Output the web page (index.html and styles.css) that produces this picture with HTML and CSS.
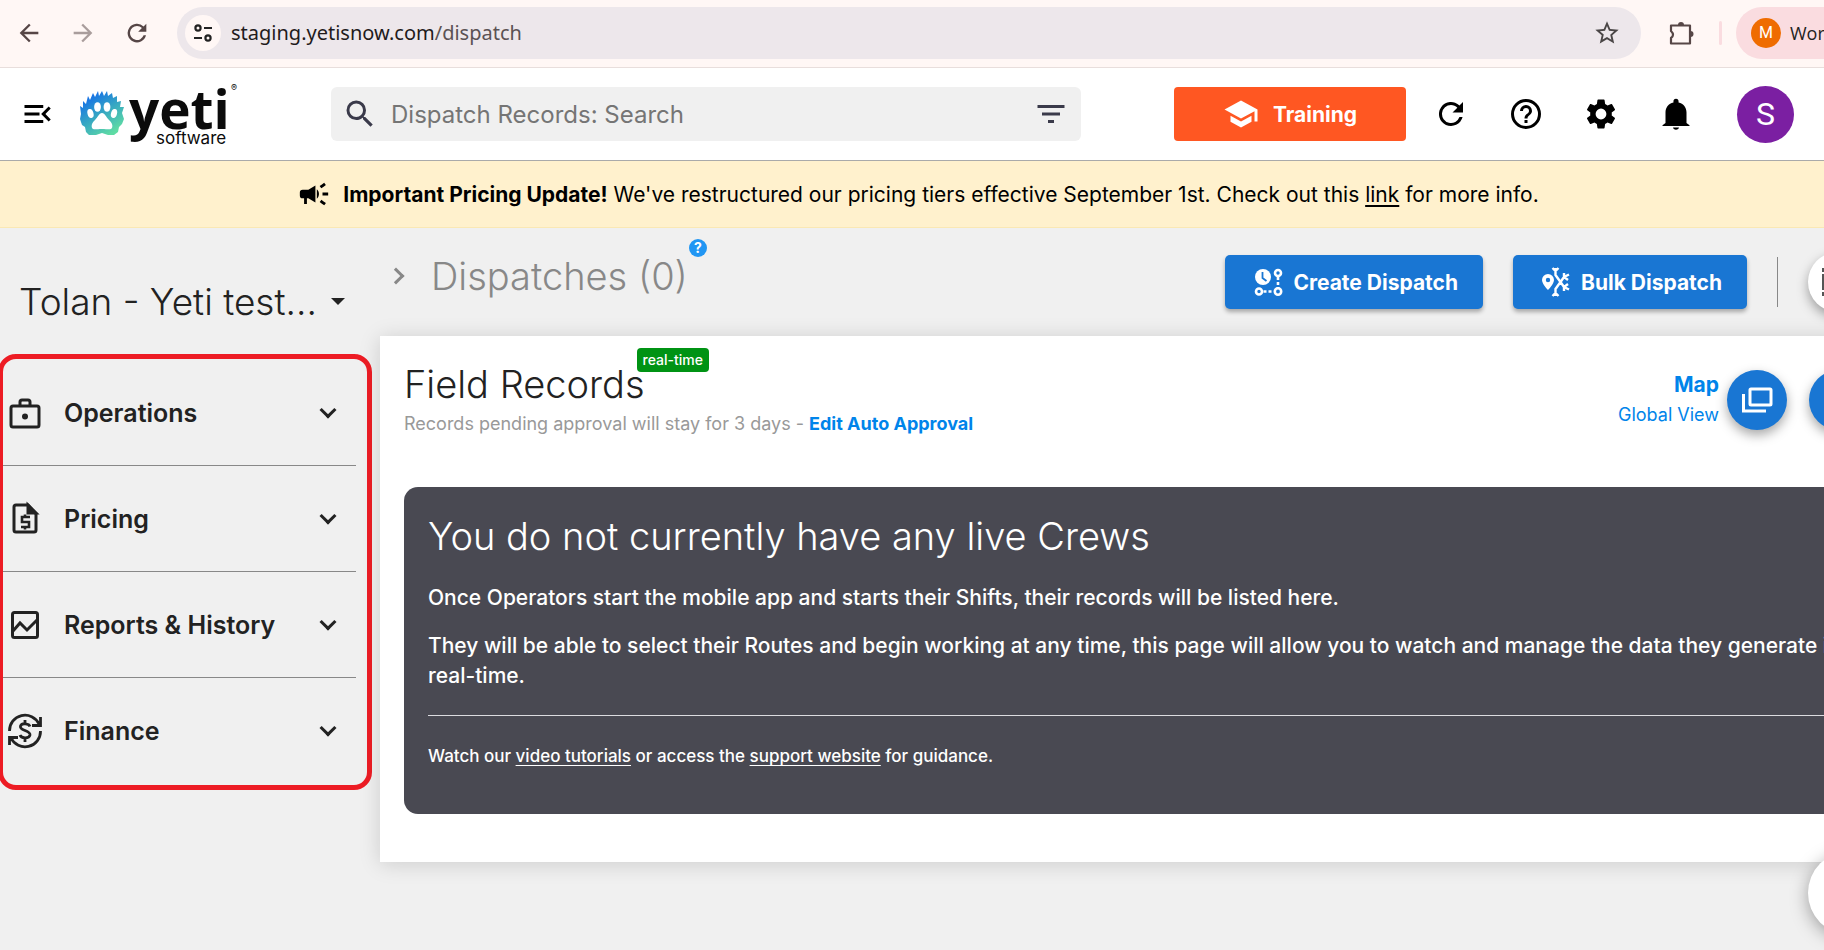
FILE: index.html
```html
<!DOCTYPE html>
<html lang="en">
<head>
<meta charset="utf-8">
<title>Yeti Software - Dispatch</title>
<link rel="stylesheet" href="styles.css">
</head>
<body>
<div class="browser-bar">
  <button class="nav-btn" aria-label="Back"><svg width="28" height="28" viewBox="0 0 24 24"><path d="M20 11H7.8l5.6-5.6L12 4l-8 8 8 8 1.4-1.4L7.8 13H20z"/></svg></button>
  <button class="nav-btn nav-off" aria-label="Forward"><svg width="28" height="28" viewBox="0 0 24 24"><path d="M4 13h12.2l-5.6 5.6L12 20l8-8-8-8-1.4 1.4 5.6 5.6H4z"/></svg></button>
  <button class="nav-btn" aria-label="Reload"><svg width="28" height="28" viewBox="0 0 24 24"><path d="M17.65 6.35A8 8 0 1 0 19.73 14h-2.08A6 6 0 1 1 12 6c1.66 0 3.14.69 4.22 1.78L13 11h7V4z"/></svg></button>
  <div class="address">
    <span class="site-info"><svg width="24" height="24" viewBox="0 0 24 24" fill="none" stroke="#222" stroke-width="2.2"><circle cx="7" cy="7" r="2.6"/><path d="M13 7h8M3 17h8"/><circle cx="17" cy="17" r="2.6"/></svg></span>
    <span class="url">staging.yetisnow.com<span class="url-path">/dispatch</span></span>
    <button class="star" aria-label="Bookmark"><svg width="28" height="28" viewBox="0 0 24 24"><path d="M22 9.24l-7.19-.62L12 2 9.19 8.63 2 9.24l5.46 4.73L5.82 21 12 17.27 18.18 21l-1.63-7.03zM12 15.4l-3.76 2.27 1-4.28-3.32-2.88 4.38-.38L12 6.1l1.71 4.04 4.38.38-3.32 2.88 1 4.28z"/></svg></button>
  </div>
  <button class="nav-btn ext" aria-label="Extensions"><svg width="28" height="28" viewBox="0 0 28 28"><path d="M4 6.500h19v18h-19v-5.500q4-3 0-7z" fill="none" stroke="#564646" stroke-width="2.200" stroke-linejoin="round"/><path d="M11 6a3 3 0 0 1 6 0zM23.500 12a3 3 0 0 1 0 6z"/></svg></button>
  <span class="bar-sep"></span>
  <div class="profile"><span class="profile-dot">M</span><span>Work</span></div>
</div>

<header class="app-bar">
  <button class="plain" aria-label="Collapse menu"><svg width="36" height="36" viewBox="0 0 24 24"><path d="M3 18h12.500v-2H3zM3 13h10v-2H3zM3 6v2h12.500V6zM20.500 15.590L16.920 12l3.580-3.590L19.090 7l-5 5 5 5z"/></svg></button>
  <a class="logo" href="#" aria-label="Yeti software">
    <svg width="164" height="76" viewBox="0 0 164 76">
      <defs><linearGradient id="fur" x1="0.200" y1="0.100" x2="0.750" y2="0.950"><stop offset="0" stop-color="#146fe8"/><stop offset="0.500" stop-color="#37a8c2"/><stop offset="1" stop-color="#5fdca4"/></linearGradient></defs>
      <g transform="translate(0 15)">
        <path fill="url(#fur)" d="M1 23L0 15L3 17L3 10L6 13L8 5L10 9L13 2L15 6L18 0L19 5L22 0L24 5L27 0L28 5L32 2L33 7L37 5L37 11L41 10L40 16L44 16L42 22L44 28L42 33L39 36L38 41L34 44L28 44L22 42L16 44L9 44L6 41L5 36L2 34L0 28z"/>
        <g fill="#fff"><ellipse cx="17.500" cy="16" rx="3.400" ry="4.800"/><ellipse cx="27" cy="16" rx="3.400" ry="4.800"/><ellipse cx="10.500" cy="22.500" rx="3" ry="4.600" transform="rotate(-15 10.500 22.500)"/><ellipse cx="34" cy="22.500" rx="3" ry="4.600" transform="rotate(15 34 22.500)"/><path d="M22 22C25 22 26 26 29 29C32 32 33 34 32 37C31 39 28 38 22 38C16 38 13 39 12 37C11 34 12 32 15 29C18 26 19 22 22 22z"/></g>
      </g>
      <text class="logo-word" x="49" y="53">yeti</text>
      <text class="logo-sub" x="76" y="68">software</text>
      <text class="logo-reg" x="151" y="15">®</text>
    </svg>
  </a>
  <div class="search">
    <svg width="36" height="36" viewBox="0 0 24 24" fill="#3a3a4a"><path d="M15.500 14h-.790l-.280-.270A6.470 6.470 0 0 0 16 9.500 6.500 6.500 0 1 0 9.500 16c1.610 0 3.090-.590 4.230-1.570l.270.280v.790l5 4.990L20.490 19zm-6 0C7.010 14 5 11.990 5 9.500S7.010 5 9.500 5 14 7.010 14 9.500 11.990 14 9.500 14z"/></svg>
    <input type="text" aria-label="Search dispatch records" placeholder="Dispatch Records: Search">
    <button class="plain" aria-label="Filter"><svg width="36" height="36" viewBox="0 0 24 24" fill="#3a3a4a"><path d="M10 18h4v-2h-4zM3 6v2h18V6zm3 7h12v-2H6z"/></svg></button>
  </div>
  <div class="app-actions">
    <button class="training"><svg width="36" height="36" viewBox="0 0 24 24" fill="#fff"><path d="M5 13.180v4L12 21l7-3.820v-4L12 17zM12 3L1 9l11 6 9-4.910V17h2V9z"/></svg>Training</button>
    <button class="plain" aria-label="Refresh"><svg width="36" height="36" viewBox="0 0 24 24"><path d="M17.650 6.350A8 8 0 1 0 19.730 14h-2.080A6 6 0 1 1 12 6c1.660 0 3.140.690 4.220 1.780L13 11h7V4z"/></svg></button>
    <button class="plain" aria-label="Help"><svg width="36" height="36" viewBox="0 0 24 24"><path d="M11 18h2v-2h-2zm1-16a10 10 0 1 0 0 20 10 10 0 0 0 0-20zm0 18a8 8 0 1 1 0-16 8 8 0 0 1 0 16zm0-14a4 4 0 0 0-4 4h2a2 2 0 1 1 4 0c0 2-3 1.750-3 5h2c0-2.250 3-2.500 3-5a4 4 0 0 0-4-4z"/></svg></button>
    <button class="plain" aria-label="Settings"><svg width="36" height="36" viewBox="0 0 24 24"><path d="M19.140 12.940c.040-.300.060-.610.060-.940 0-.320-.020-.640-.070-.940l2.030-1.580a.490.490 0 0 0 .120-.610l-1.920-3.320a.488.488 0 0 0-.590-.220l-2.390.960c-.500-.380-1.030-.700-1.620-.940l-.360-2.540a.484.484 0 0 0-.480-.410h-3.840c-.240 0-.430.170-.470.410l-.360 2.540c-.590.240-1.130.570-1.620.940l-2.390-.960c-.220-.080-.470 0-.590.220L2.740 8.870c-.120.210-.080.470.120.610l2.030 1.580c-.050.300-.090.630-.090.940s.020.640.070.940l-2.030 1.580a.490.490 0 0 0-.120.610l1.920 3.320c.120.220.370.290.590.220l2.390-.960c.500.380 1.030.700 1.620.940l.360 2.540c.050.240.240.410.480.410h3.840c.240 0 .440-.170.470-.410l.360-2.540c.590-.240 1.130-.560 1.620-.940l2.390.960c.220.080.470 0 .590-.220l1.920-3.320c.120-.220.070-.470-.120-.610zM12 15.600a3.600 3.600 0 1 1 0-7.200 3.600 3.600 0 0 1 0 7.200z"/></svg></button>
    <button class="plain" aria-label="Notifications"><svg width="36" height="36" viewBox="0 0 24 24"><path d="M12 22.500c1.100 0 2-.700 2-1.500h-4c0 .800.900 1.500 2 1.500zM19 18v-7c0-3.300-2-6-5.300-6.700V3.500a1.700 1.700 0 0 0-3.400 0v.800C7 5 5 7.700 5 11v7l-2 1.500V20h18v-.500z"/></svg></button>
    <button class="avatar" aria-label="Account">S</button>
  </div>
</header>

<div class="notice">
  <svg width="34" height="34" viewBox="0 0 24 24"><path d="M18 11v2h4v-2zM16 17.610c.960.710 2.210 1.650 3.200 2.390.400-.530.800-1.070 1.200-1.600-.990-.740-2.240-1.680-3.200-2.400-.400.540-.800 1.080-1.200 1.610zM20.400 5.600c-.400-.530-.800-1.070-1.200-1.600-.990.740-2.240 1.680-3.200 2.400.400.530.800 1.070 1.200 1.600.960-.720 2.210-1.650 3.200-2.400zM4 9a2 2 0 0 0-2 2v2a2 2 0 0 0 2 2h1v4h2v-4h1l5 3V6L8 9zM15.500 12c0-1.330-.580-2.530-1.500-3.350v6.690c.920-.810 1.500-2.010 1.500-3.340z"/></svg>
  <p><strong>Important Pricing Update!</strong> We've restructured our pricing tiers effective September 1st. Check out this <a href="#">link</a> for more info.</p>
</div>

<div class="layout">
  <aside class="sidebar">
    <button class="company"><span>Tolan - Yeti test...</span><i class="caret"></i></button>
    <nav class="menu">
      <button class="menu-item"><svg width="38" height="38" viewBox="0 0 38 38" fill="none" stroke="#222" stroke-width="3"><rect x="5" y="12" width="28" height="21" rx="2"/><path d="M14 12V8q0-2 2-2h6q2 0 2 2v4"/><circle cx="19" cy="22.500" r="3" fill="#222" stroke="none"/></svg><span>Operations</span><i class="chev"></i></button>
      <button class="menu-item"><svg width="38" height="38" viewBox="0 0 38 38" fill="none" stroke="#222" stroke-width="3"><path d="M22 5H10q-2 0-2 2v23q0 2 2 2h18q2 0 2-2V14z"/><path d="M22 5v8h8z" fill="#222"/><path d="M24 17h-8v5h7v5h-8M19 14.500v3M19 26v3.500" stroke-width="2.600"/></svg><span>Pricing</span><i class="chev"></i></button>
      <button class="menu-item"><svg width="38" height="38" viewBox="0 0 38 38" fill="none" stroke="#222" stroke-width="3"><rect x="6.500" y="6.500" width="25" height="25" rx="2"/><path d="M7 25l7-8 7 7 10-10"/></svg><span>Reports &amp; History</span><i class="chev"></i></button>
      <button class="menu-item"><svg width="38" height="38" viewBox="0 0 38 38" fill="none" stroke="#222" stroke-width="2.800"><path d="M3.500 19A15.500 15.500 0 0 1 33 12M34.500 19A15.500 15.500 0 0 1 5 26M26 13.500h8.500V5M12 25.500H3.500V33"/><path d="M24 14.500c-1-3-8-4-9.500-.500-1.500 5 10 4 9.500 9-1 4-9 3.500-10 0M19 8v4M19 26v4"/></svg><span>Finance</span><i class="chev"></i></button>
    </nav>
  </aside>

  <main class="content">
    <div class="page-head">
      <i class="crumb"></i>
      <h1>Dispatches (0)<button class="tip" aria-label="Help">?</button></h1>
      <div class="head-actions">
        <button class="primary"><svg width="30" height="30" viewBox="0 0 30 30" fill="none" stroke="#fff" stroke-width="2.600"><circle cx="10" cy="10" r="8" fill="#fff" stroke="none"/><path d="M9.500 5v6l4 3" stroke="#1976d3" stroke-width="1.800"/><circle cx="25" cy="6" r="3"/><circle cx="6" cy="24.500" r="3"/><circle cx="25" cy="24.500" r="3.200"/><path d="M25 10v11M10.500 24.500h10" stroke-dasharray="3 2"/></svg>Create Dispatch</button>
        <button class="primary"><svg width="30" height="30" viewBox="0 0 30 30" fill="none" stroke="#fff" stroke-width="2.400"><path fill="#fff" stroke="none" fill-rule="evenodd" d="M7 7a6 6 0 0 0-6 6c0 4 6 10 6 10s6-6 6-10a6 6 0 0 0-6-6zm0 3.800a2.200 2.200 0 1 1 0 4.400 2.200 2.200 0 0 1 0-4.400z"/><path d="M14.500 1v7l5 7-5 7v7M11.500 1l3 3 3-3M11.500 29l3-3 3 3M19.500 15l3.500-5 5-2.500M19.500 15l3.500 5 5 2.500M23 6v4l4 3M23 24v-4l4-3"/></svg>Bulk Dispatch</button>
        <span class="head-sep"></span>
        <button class="fab fab-light" aria-label="Options"><svg width="32" height="32" viewBox="0 0 32 32" fill="none" stroke="#555" stroke-width="4"><path d="M0 4h28M2 8v16M0 28h28M10 12v8h8"/></svg></button>
      </div>
    </div>

    <section class="card">
      <div class="card-head">
        <div>
          <h2>Field Records<span class="badge">real-time</span></h2>
          <p class="sub">Records pending approval will stay for 3 days - <a href="#">Edit Auto Approval</a></p>
        </div>
        <div class="card-tools">
          <a class="map-link" href="#"><b>Map</b><span>Global View</span></a>
          <button class="fab" aria-label="Open map"><svg width="32" height="32" viewBox="0 0 32 32" fill="none" stroke="#fff" stroke-width="3"><rect x="9" y="5" width="21" height="16" rx="1"/><path d="M2.500 10v17H25"/></svg></button>
          <button class="fab fab-next" aria-label="More"></button>
        </div>
      </div>
      <div class="empty">
        <h3>You do not currently have any live Crews</h3>
        <p>Once Operators start the mobile app and starts their Shifts, their records will be listed here.</p>
        <p>They will be able to select their Routes and begin working at any time, this page will allow you to watch and manage the data they generate in real-time.</p>
        <hr>
        <p class="guide">Watch our <a href="#">video tutorials</a> or access the <a href="#">support website</a> for guidance.</p>
      </div>
    </section>
  </main>
</div>
<button class="chat" aria-label="Chat"></button>
</body>
</html>
```

FILE: styles.css
```css
* { box-sizing: border-box; }
html, body { height: 100%; }
body {
  margin: 0;
  overflow: hidden;
  display: flex;
  flex-direction: column;
  background: #f0f0f0;
  color: #222;
  font-family: Inter, "Liberation Sans", sans-serif;
}
button { border: 0; background: none; padding: 0; font: inherit; color: inherit; }
svg { flex: none; display: block; }
h1, h2, h3, p { margin: 0; }

/* Browser toolbar */
.browser-bar {
  flex: none;
  display: flex;
  align-items: center;
  height: 68px;
  padding-left: 15px;
  padding-bottom: 2px;
  background: #fff7f5;
  border-bottom: 1px solid #e8dedc;
  overflow: hidden;
}
.nav-btn { margin-right: 26px; fill: #564646; flex: none; }
.nav-off { opacity: 0.5; }
.address {
  flex: 1;
  display: flex;
  align-items: center;
  height: 52px;
  margin-right: 26px;
  padding: 0 20px 0 8px;
  border-radius: 26px;
  background: #ede7eb;
}
.site-info {
  width: 36px;
  height: 36px;
  border-radius: 50%;
  background: #fff7f5;
  display: grid;
  place-items: center;
}
.url { flex: 1; margin-left: 10px; font: 20px "Noto Sans", "Open Sans", sans-serif; color: #1f1b1c; }
.url-path { color: #5b5254; }
.star { fill: #4a4646; }
.ext { margin-right: 24px; }
.bar-sep { width: 3px; height: 24px; border-radius: 2px; background: #fadce0; margin-right: 14px; }
.profile {
  display: flex;
  align-items: center;
  gap: 9px;
  width: 88px;
  height: 52px;
  padding-left: 15px;
  border-radius: 26px 0 0 26px;
  background: #fadce0;
  font: 18px "Open Sans", sans-serif;
  overflow: hidden;
}
.profile-dot {
  flex: none;
  width: 30px;
  height: 30px;
  border-radius: 50%;
  background: #ef6c00;
  color: #fff;
  font: 16px/30px Roboto, sans-serif;
  text-align: center;
}

/* Application bar */
.app-bar {
  flex: none;
  display: flex;
  align-items: center;
  height: 93px;
  padding: 0 30px 0 20px;
  background: #fff;
  border-bottom: 1px solid #aaa;
}
.plain { flex: none; }
.logo { margin-left: 24px; flex: none; }
.logo-word { font: 700 53px "Open Sans", sans-serif; fill: #0b0b0b; }
.logo-sub { font: 17px Inter, sans-serif; fill: #0b0b0b; }
.logo-reg { font: 9px Inter, sans-serif; fill: #0b0b0b; }
.search {
  flex: 0 1 750px;
  display: flex;
  align-items: center;
  height: 54px;
  margin-left: 87px;
  padding: 0 12px 0 11px;
  border-radius: 6px;
  background: #f0f0f0;
}
.search input {
  flex: 1;
  min-width: 0;
  margin-left: 13px;
  padding: 0;
  border: 0;
  outline: 0;
  background: none;
  font: 24px Inter, sans-serif;
}
.search input::placeholder { color: #757575; opacity: 1; }
.app-actions { display: flex; align-items: center; gap: 39px; margin-left: auto; }
.training {
  display: flex;
  align-items: center;
  justify-content: center;
  gap: 14px;
  width: 232px;
  height: 54px;
  margin-right: -12px;
  border-radius: 4px;
  background: #ff5722;
  color: #fff;
  font-size: 21px;
  font-weight: 700;
}
.avatar {
  width: 57px;
  height: 57px;
  margin-left: 4px;
  border-radius: 50%;
  background: #7b1fa2;
  color: #fff;
  font: 32px Roboto, sans-serif;
}

/* Announcement */
.notice {
  flex: none;
  display: flex;
  align-items: center;
  justify-content: center;
  gap: 12px;
  height: 67px;
  padding-left: 12px;
  background: #fff1cd;
  border-bottom: 1px solid #fae8b4;
  color: #000;
  font-size: 21px;
}
.notice a { color: inherit; text-underline-offset: 3px; }

/* Page layout */
.layout { flex: 1; display: flex; min-height: 0; }
.sidebar { flex: none; width: 380px; padding-top: 40px; }
.company {
  display: flex;
  align-items: center;
  gap: 14px;
  height: 66px;
  padding-left: 19px;
  font-size: 37px;
  font-weight: 300;
}
.caret { border: 7px solid transparent; border-top-color: #222; border-bottom: 0; }
.menu {
  width: 374px;
  height: 436px;
  margin: 20px 0 0 -2px;
  border: 5px solid #ed1c24;
  border-radius: 18px;
  padding: 1px 11px 0 0;
}
.menu-item {
  display: flex;
  align-items: center;
  width: 100%;
  height: 106px;
  padding: 0 19px 0 3px;
  border-bottom: 1px solid #888;
  font-size: 25px;
  font-weight: 600;
}
.menu-item:last-child { border-bottom: 0; }
.menu-item span { flex: 1; margin-left: 20px; text-align: left; }
.chev, .crumb {
  flex: none;
  width: 12px;
  height: 12px;
  margin: 0 3px 6px 0;
  border: solid #222;
  border-width: 0 3px 3px 0;
  transform: rotate(45deg);
}
.content { flex: 1; min-width: 0; }
.page-head { display: flex; align-items: center; height: 108px; padding-left: 10px; }
.crumb { margin: 0 29px 12px 0; border-color: #888; transform: rotate(-45deg); }
.page-head h1 {
  display: flex;
  margin-bottom: 12px;
  color: #888;
  font-size: 38px;
  font-weight: 300;
  white-space: nowrap;
}
.tip {
  flex: none;
  width: 18px;
  height: 18px;
  margin-left: 1px;
  margin-top: -14px;
  border-radius: 50%;
  background: #2196f3;
  color: #fff;
  font: 700 14px/18px Inter, sans-serif;
}
.head-actions { display: flex; align-items: center; gap: 30px; margin-left: auto; margin-right: -44px; }
.primary {
  display: flex;
  align-items: center;
  gap: 10px;
  height: 54px;
  padding: 0 25px 0 28px;
  border-radius: 5px;
  background: #1976d3;
  color: #fff;
  font-size: 21px;
  font-weight: 700;
  white-space: nowrap;
  box-shadow: 0 3px 4px rgba(0, 0, 0, 0.3);
}
.head-sep { width: 1px; height: 50px; background: #888; }
.fab {
  flex: none;
  display: grid;
  place-items: center;
  width: 60px;
  height: 60px;
  border-radius: 50%;
  background: #1976d3;
  box-shadow: 0 5px 12px rgba(0, 0, 0, 0.35);
}
.fab-light { background: #fff; }

/* Records card */
.card {
  margin-right: -72px;
  padding: 24px 24px 48px;
  background: #fff;
  box-shadow: 0 2px 20px rgba(0, 0, 0, 0.15);
}
.card-head { display: flex; justify-content: space-between; height: 127px; }
.card-head h2 {
  display: flex;
  font-size: 38px;
  font-weight: 300;
  line-height: 48px;
}
.badge {
  align-self: flex-start;
  height: 24px;
  margin: -12px 0 0 -8px;
  padding: 0 6px;
  border-radius: 4px;
  background: #009314;
  color: #fff;
  font-size: 14px;
  font-weight: 500;
  line-height: 24px;
}
.sub { margin-top: 4px; color: #999; font-size: 18px; line-height: 24px; }
.sub a { color: #0084ea; font-weight: 700; text-decoration: none; }
.card-tools { display: flex; align-items: center; align-self: flex-start; height: 80px; margin-right: 3px; }
.map-link {
  margin-right: 8px;
  color: #0084ea;
  text-align: right;
  text-decoration: none;
  font-size: 18px;
  line-height: 30px;
}
.map-link b, .map-link span { display: block; }
.map-link b { font-size: 21px; }
.fab-next { margin-left: 22px; }
.empty {
  padding: 30px 24px 43px;
  border-radius: 14px;
  background: #494952;
  color: #fff;
  font-size: 21px;
  font-weight: 500;
  line-height: 30px;
}
.empty h3 { font-size: 38px; font-weight: 300; line-height: 38px; margin-bottom: 28px; }
.empty p { margin-bottom: 18px; }
.empty hr { margin: 24px 0 25px; border: 0; border-top: 1px solid #dcdce0; }
.empty .guide { margin: 0; font-size: 17px; }
.empty a { color: inherit; text-underline-offset: 3px; }

.chat {
  position: fixed;
  right: -68px;
  bottom: 15px;
  width: 84px;
  height: 84px;
  border-radius: 50%;
  background: #fff;
  box-shadow: 0 4px 18px rgba(0, 0, 0, 0.35);
}
```
